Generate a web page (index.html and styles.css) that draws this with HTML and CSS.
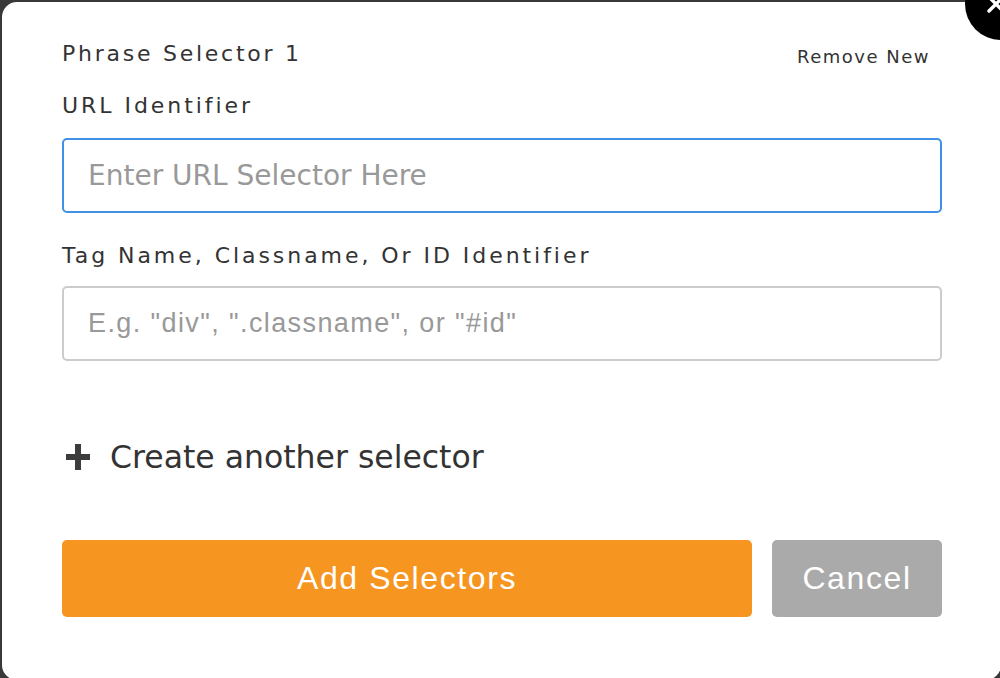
FILE: index.html
```html
<!DOCTYPE html>
<html lang="en">
<head>
    <meta charset="UTF-8">
    <meta name="viewport" content="width=device-width, initial-scale=1.0">
    <title>Phrase Selectors</title>
    <link rel="stylesheet" href="styles.css">
</head>
<body>

    <div class="modal">
        <button class="close-btn" type="button" aria-label="Close">
            <svg width="20" height="20" viewBox="0 0 20 20">
                <path d="M3 3 L17 17 M17 3 L3 17" stroke="#fff" stroke-width="3.4" stroke-linecap="round"/>
            </svg>
        </button>

        <div class="selector-head">
            <span class="selector-title">Phrase Selector 1</span>
            <a class="remove-link" href="#">Remove New</a>
        </div>

        <label class="field-label label-url" for="url">URL Identifier</label>
        <input class="field-input focused" id="url" type="text" placeholder="Enter URL Selector Here">

        <label class="field-label label-tag" for="tag">Tag Name, Classname, Or ID Identifier</label>
        <input class="field-input tag-input" id="tag" type="text" placeholder="E.g. &quot;div&quot;, &quot;.classname&quot;, or &quot;#id&quot;">

        <div class="add-another">
            <span class="plus"></span>
            <span>Create another selector</span>
        </div>

        <div class="actions">
            <button class="btn btn-primary" type="button">Add Selectors</button>
            <button class="btn btn-cancel" type="button">Cancel</button>
        </div>
    </div>

</body>
</html>
```

FILE: styles.css
```css
body {
    font-family: "DejaVu Sans", Inter, sans-serif;
    margin: 0;
    padding: 0;
    background-color: #393939;
    color: #333;
    height: 678px;
    overflow: hidden;
}

.modal {
    position: relative;
    box-sizing: border-box;
    width: 999px;
    height: 678px;
    margin: 2px 0 0 2px;
    padding: 40px 58px 0 60px;
    background-color: #fff;
    border-radius: 15px;
}

.close-btn {
    position: absolute;
    top: -34px;
    right: -36px;
    width: 72px;
    height: 72px;
    border: none;
    border-radius: 50%;
    background-color: #000;
    padding: 0;
    display: flex;
    align-items: center;
    justify-content: center;
}

.close-btn svg {
    margin: 0 10px 0 0;
}

.selector-head {
    display: flex;
    justify-content: space-between;
    align-items: baseline;
    padding-right: 13px;
}

.selector-title {
    font-size: 22px;
    line-height: 24px;
    letter-spacing: 2.75px;
}

.remove-link {
    position: relative;
    top: 2px;
    font-size: 18px;
    color: #333;
    text-decoration: none;
    letter-spacing: 1.5px;
}

.field-label {
    display: block;
    font-size: 22px;
    line-height: 24px;
    letter-spacing: 2.95px;
}

.label-url {
    margin-top: 28px;
}

.label-tag {
    margin-top: 31px;
}

.field-input {
    display: block;
    box-sizing: border-box;
    width: 880px;
    height: 75px;
    margin-top: 20px;
    padding: 0 24px;
    border: 2px solid #cccccc;
    border-radius: 5px;
    font-family: "DejaVu Sans", Inter, sans-serif;
    font-size: 28px;
    color: #333;
    outline: none;
}

.field-input.focused {
    border-color: #3e91e4;
}

.field-input::placeholder {
    color: #999;
}

.tag-input {
    margin-top: 18px;
    font-family: "Liberation Sans", Arial, sans-serif;
    font-size: 27px;
    letter-spacing: 1.4px;
}

.add-another {
    display: flex;
    align-items: center;
    gap: 20px;
    margin-top: 78px;
    padding-left: 4px;
    font-size: 31.5px;
    line-height: 36px;
    color: #333;
}

.plus {
    position: relative;
    width: 24px;
    height: 26px;
}

.plus::before,
.plus::after {
    content: "";
    position: absolute;
    background-color: #3c3c3c;
}

.plus::before {
    left: 0;
    right: 0;
    top: 10px;
    height: 6px;
}

.plus::after {
    top: 0;
    bottom: 0;
    left: 9px;
    width: 6px;
}

.actions {
    display: flex;
    gap: 20px;
    margin-top: 65px;
    width: 880px;
}

.btn {
    height: 77px;
    border: none;
    border-radius: 5px;
    color: #fff;
    font-family: "Liberation Sans", Arial, sans-serif;
    font-size: 32px;
    letter-spacing: 1.6px;
}

.btn-primary {
    flex: 1;
    background-color: #f6951f;
}

.btn-cancel {
    width: 170px;
    background-color: #aaaaaa;
}
```
